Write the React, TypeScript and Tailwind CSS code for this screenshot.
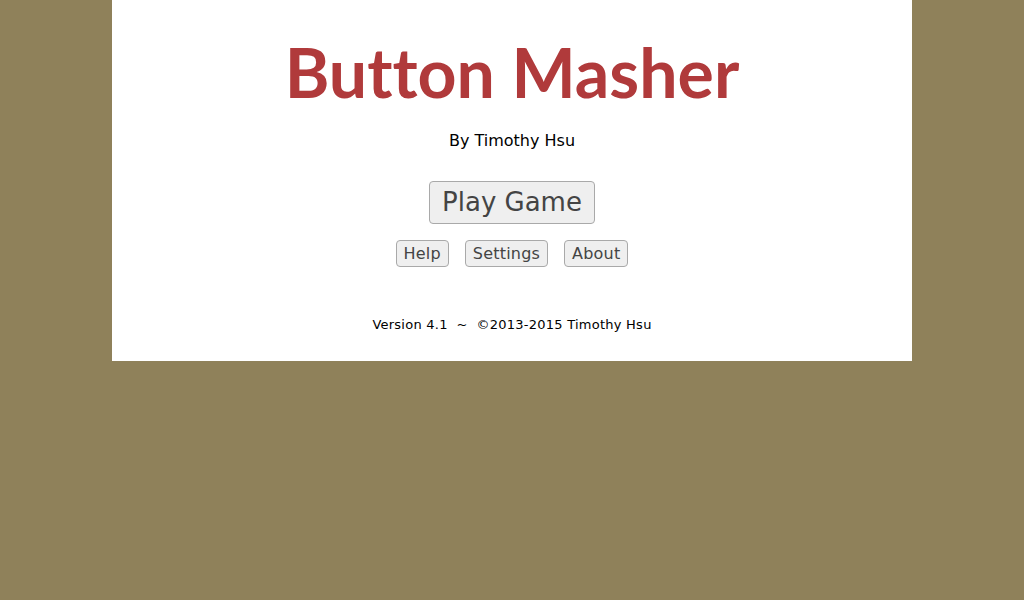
export default function App() {
  return (
    <div className="min-h-[600px] w-full bg-[#8f815a]">
      <div className="mx-auto flex h-[361px] w-[800px] flex-col items-center bg-white font-['DejaVu_Sans',sans-serif]">
        <h1 className="mt-[30px] font-['Lato',sans-serif] text-[68px] leading-[84px] font-bold text-[#b03a3b] [font-variant-ligatures:none]">
          Button Masher
        </h1>

        <p className="mt-[17px] text-[16px] leading-[20px] text-black">
          By Timothy Hsu
        </p>

        <button className="mt-[30px] h-[43px] w-[166px] rounded-[4px] border border-[#a9a9a9] bg-[#efefef] text-[26px] text-[#444]">
          Play Game
        </button>

        <div className="mt-[16px] flex gap-[16px]">
          {["Help", "Settings", "About"].map((label) => (
            <button
              key={label}
              className="h-[27px] rounded-[4px] border border-[#a9a9a9] bg-[#efefef] px-[7px] text-[16px] tracking-[0.2px] text-[#444]"
            >
              {label}
            </button>
          ))}
        </div>

        <p className="mt-[50px] text-[13px] leading-[16px] tracking-[0.25px] text-black">
          Version 4.1 &nbsp;~&nbsp; ©2013-2015 Timothy Hsu
        </p>
      </div>
    </div>
  );
}
